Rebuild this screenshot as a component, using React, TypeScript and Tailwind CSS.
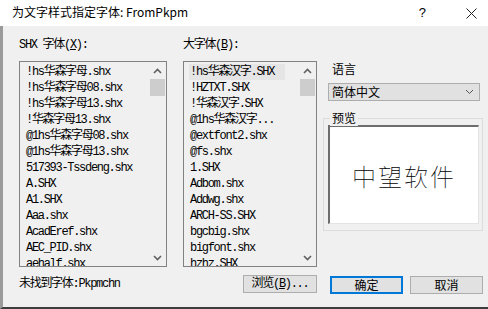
import React from "react";

const shxFonts = [
	"!hs华森字母.shx",
	"!hs华森字母08.shx",
	"!hs华森字母13.shx",
	"!华森字母13.shx",
	"@1hs华森字母08.shx",
	"@1hs华森字母13.shx",
	"517393-Tssdeng.shx",
	"A.SHX",
	"A1.SHX",
	"Aaa.shx",
	"AcadEref.shx",
	"AEC_PID.shx",
	"aehalf.shx",
];

const bigFonts = [
	"!hs华森汉字.SHX",
	"!HZTXT.SHX",
	"!华森汉字.SHX",
	"@1hs华森汉字...",
	"@extfont2.shx",
	"@fs.shx",
	"1.SHX",
	"Adbom.shx",
	"Addwg.shx",
	"ARCH-SS.SHX",
	"bgcbig.shx",
	"bigfont.shx",
	"hzhz.SHX",
];

const mono = "font-['Liberation_Mono','Noto_Sans_CJK_SC',monospace] text-[12px] tracking-[-1.3px]";
const ui = "font-['Noto_Sans_CJK_SC',sans-serif] text-[12px]";

function Chevron(props: { down?: boolean }) {
	return (
		<svg width="9" height="6" viewBox="0 0 9 6" className={props.down ? "rotate-180" : ""}>
			<path d="M1 5 L4.5 1.5 L8 5" fill="none" stroke="#606060" strokeWidth="1.6" />
		</svg>
	);
}

function ScrollBar() {
	return (
		<div className="flex w-[17px] flex-col items-center">
			<div className="flex h-[17px] w-full items-center justify-center">
				<Chevron />
			</div>
			<div className="h-[17px] w-[15px] bg-[#cdcdcd]" />
			<div className="flex-1" />
			<div className="flex h-[17px] w-full items-center justify-center">
				<Chevron down />
			</div>
		</div>
	);
}

function FontList(props: { items: string[]; selected?: number; width: string }) {
	return (
		<div className={`mt-[8px] flex h-[206px] ${props.width} border border-[#828282] bg-[#f0f0f0]`}>
			<div className="flex-1 overflow-hidden pt-[2px] pl-[6px]">
				{props.items.map((item, i) => (
					<div
						key={item}
						className={`h-[16px] whitespace-nowrap leading-[16px] ${mono} ${
							i === props.selected ? "-ml-[1px] w-[96px] bg-[#e5e5e5] pl-[1px]" : ""
						}`}
					>
						{item}
					</div>
				))}
			</div>
			<ScrollBar />
		</div>
	);
}

function Button(props: { children: React.ReactNode; primary?: boolean; width: string }) {
	return (
		<div
			className={`flex h-[18px] ${props.width} items-center justify-center bg-[#e1e1e1] ${ui} leading-none ${
				props.primary ? "border-2 border-[#0078d7]" : "border border-[#adadad]"
			}`}
		>
			{props.children}
		</div>
	);
}

export default function App() {
	return (
		<div className="flex h-[309px] w-[488px] flex-col overflow-hidden bg-white text-black">
			<div className={`flex h-[26px] shrink-0 items-center bg-white pl-[12px] ${ui}`}>
				<span className="flex-1 pb-[2px]">为文字样式指定字体: FromPkpm</span>
				<span className="mr-[40px] font-['Liberation_Sans',sans-serif] text-[13px]">?</span>
				<svg width="11" height="11" viewBox="0 0 11 11" className="mr-[11px]">
					<path d="M0.5 0.5 L10.5 10.5 M10.5 0.5 L0.5 10.5" stroke="#222" strokeWidth="1" />
				</svg>
			</div>

			<div className="flex flex-1 border-b-2 border-l-[3px] border-b-[#3c3c3c] border-l-[#9a9a9a] bg-[#f0f0f0] pt-[11px] pl-[16px]">
				<div className="flex w-[148px] flex-col">
					<div className={`h-[16px] leading-[16px] ${mono}`}>
						SHX 字体(<span className="underline">X</span>):
					</div>
					<FontList items={shxFonts} width="w-[148px]" />
					<div className={`mt-[9px] h-[16px] leading-[16px] whitespace-nowrap ${mono}`}>未找到字体:Pkpmchn</div>
				</div>

				<div className="ml-[16px] flex w-[134px] flex-col">
					<div className={`h-[16px] leading-[16px] ${mono}`}>
						大字体(<span className="underline">B</span>):
					</div>
					<FontList items={bigFonts} selected={0} width="w-[134px]" />
					<div className="mt-[8px] flex justify-end">
						<Button width="w-[74px]">
							<span className={mono}>
								浏览(<span className="underline">B</span>)...
							</span>
						</Button>
					</div>
				</div>

				<div className="ml-[6px] flex w-[160px] flex-col">
					<div className={`mt-[24px] pl-[9px] h-[16px] leading-[16px] ${ui}`}>语言</div>
					<div className="mt-[6px] ml-[5px] flex h-[18px] w-[152px] items-center justify-between border border-[#adadad] bg-[#e1e1e1] pr-[5px] pl-[3px]">
						<span className={`${ui} leading-none`}>简体中文</span>
						<svg width="9" height="6" viewBox="0 0 9 6">
							<path d="M1 1 L4.5 4.5 L8 1" fill="none" stroke="#555" strokeWidth="1" />
						</svg>
					</div>
					<div className="relative mt-[17px] h-[113px] w-[160px] border border-[#dcdcdc] px-[4px] pt-[6px]">
						<span className={`absolute -top-[9px] left-[6px] bg-[#f0f0f0] px-[2px] leading-[16px] ${ui}`}>预览</span>
						<div className="flex h-[99px] w-[151px] items-center justify-center border-t-2 border-l-2 border-r border-b border-t-[#6d6d6d] border-l-[#6d6d6d] border-r-[#e3e3e3] border-b-[#e3e3e3] bg-white">
							<span className="mt-[2px] font-['Noto_Sans_CJK_SC',sans-serif] text-[24px] font-thin tracking-[2px] leading-none">
								中望软件
							</span>
						</div>
					</div>
					<div className="mt-[45px] ml-[7px] flex gap-[7px]">
						<Button width="w-[73px]" primary>
							确定
						</Button>
						<Button width="w-[73px]">取消</Button>
					</div>
				</div>
			</div>
		</div>
	);
}
